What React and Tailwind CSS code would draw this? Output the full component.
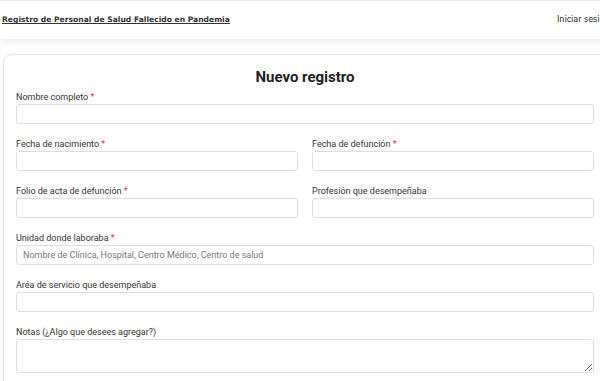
import React from "react";

function Label({ children, req }) {
  return (
    <label className="block text-[9px] leading-[14px] text-[#333]">
      {children}
      {req && <span className="text-[#e3342f]"> *</span>}
    </label>
  );
}

function Field({ label, req, placeholder }) {
  return (
    <div className="mb-[13px]">
      <Label req={req}>{label}</Label>
      <input
        placeholder={placeholder}
        className="block w-full h-[20px] rounded-[3px] border border-[#dedede] bg-white px-[6px] text-[9px] text-[#333] placeholder:text-[#777] outline-none"
      />
    </div>
  );
}

export default function App() {
  return (
    <div className="w-[600px] h-[381px] overflow-hidden bg-white" style={{ fontFamily: "Roboto, 'Liberation Sans', sans-serif" }}>
      <div className="w-[610px]">
        <header className="relative z-10 h-[39px] border-t border-[#e6e6e6] bg-white shadow-[0_3px_8px_rgba(0,0,0,0.08)] grid grid-cols-[555px_1fr] items-center">
          <a
            className="pl-[2px] text-[7.6px] font-semibold underline text-[#333]"
            style={{ fontFamily: "'DejaVu Sans', sans-serif" }}
          >
            Registro de Personal de Salud Fallecido en Pandemia
          </a>
          <a
            className="pl-[2px] text-[8px] text-[#222] whitespace-nowrap"
            style={{ fontFamily: "'DejaVu Sans', sans-serif" }}
          >
            Iniciar sesión
          </a>
        </header>
        <main className="pt-[15px] px-[3px]">
          <section className="rounded-[9px] border border-[#e2e2e2] bg-white shadow-[0_0_3px_rgba(0,0,0,0.06)] px-[12px] pt-[12px] pb-[20px]">
            <h1 className="text-center text-[15px] leading-[20px] font-bold text-[#222] mb-[3px]">Nuevo registro</h1>
            <Field label="Nombre completo" req />
            <div className="grid grid-cols-2 gap-x-[14px]">
              <Field label="Fecha de nacimiento" req />
              <Field label="Fecha de defunción" req />
              <Field label="Folio de acta de defunción" req />
              <Field label="Profesión que desempeñaba" />
            </div>
            <Field label="Unidad donde laboraba" req placeholder="Nombre de Clínica, Hospital, Centro Médico, Centro de salud" />
            <Field label="Aréa de servicio que desempeñaba" />
            <div className="mb-[13px]">
              <Label>Notas (¿Algo que desees agregar?)</Label>
              <textarea className="block w-full h-[34px] rounded-[3px] border border-[#dedede] bg-white px-[6px] text-[9px] outline-none" />
            </div>
          </section>
        </main>
      </div>
    </div>
  );
}
